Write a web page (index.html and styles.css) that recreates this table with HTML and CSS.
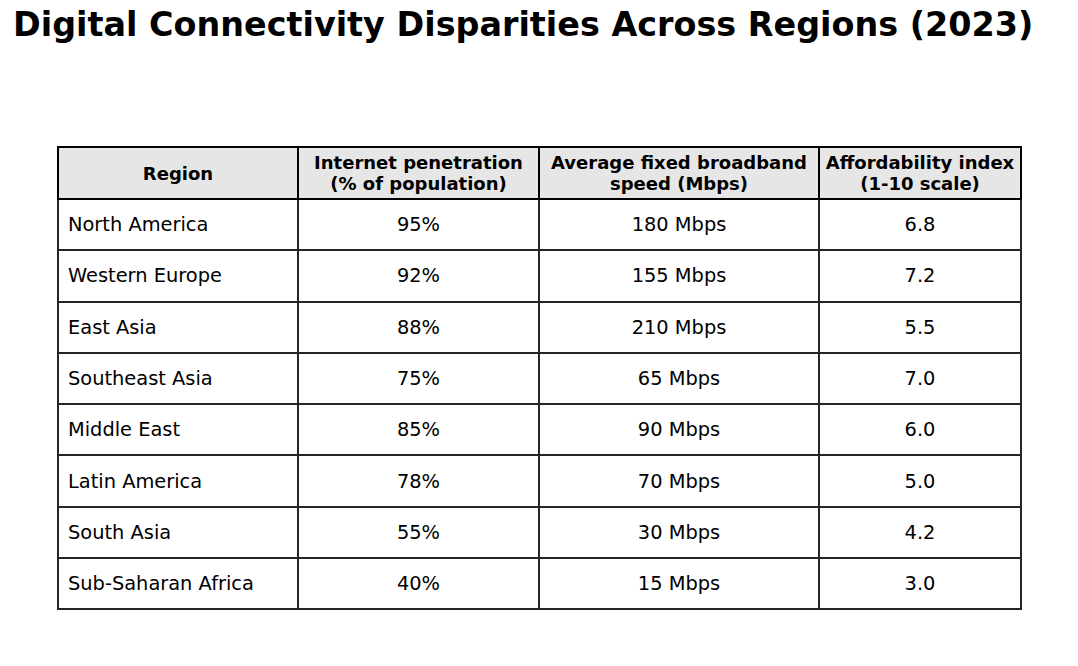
FILE: index.html
```html
<!DOCTYPE html>
<html>
<head>
<meta charset="utf-8">
<link rel="stylesheet" href="styles.css">
</head>
<body>
<h1 class="title">Digital Connectivity Disparities Across Regions (2023)</h1>
<div class="wrap">
<table class="data">
<colgroup>
<col class="c1"><col class="c2"><col class="c3"><col class="c4">
</colgroup>
<thead>
<tr><th>Region</th><th>Internet penetration<br>(% of population)</th><th>Average fixed broadband<br>speed (Mbps)</th><th>Affordability index<br>(1-10 scale)</th></tr>
</thead>
<tbody>
<tr><td class="name">North America</td><td>95%</td><td>180 Mbps</td><td>6.8</td></tr>
<tr><td class="name">Western Europe</td><td>92%</td><td>155 Mbps</td><td>7.2</td></tr>
<tr><td class="name">East Asia</td><td>88%</td><td>210 Mbps</td><td>5.5</td></tr>
<tr><td class="name">Southeast Asia</td><td>75%</td><td>65 Mbps</td><td>7.0</td></tr>
<tr><td class="name">Middle East</td><td>85%</td><td>90 Mbps</td><td>6.0</td></tr>
<tr><td class="name">Latin America</td><td>78%</td><td>70 Mbps</td><td>5.0</td></tr>
<tr><td class="name">South Asia</td><td>55%</td><td>30 Mbps</td><td>4.2</td></tr>
<tr><td class="name">Sub-Saharan Africa</td><td>40%</td><td>15 Mbps</td><td>3.0</td></tr>
</tbody>
</table>
</div>
</body>
</html>
```
FILE: styles.css
```css
html, body {
  margin: 0;
  padding: 0;
  background: #fff;
  font-family: "DejaVu Sans", sans-serif;
  color: #000;
}
.title {
  margin: 8px 0 0 13px;
  font-size: 33.4px;
  line-height: 34px;
  font-weight: bold;
  white-space: nowrap;
}
.wrap {
  padding: 104px 0 0 57px;
}
.data {
  border-collapse: collapse;
  table-layout: fixed;
  width: 963px;
}
.c1 { width: 240px; }
.c2 { width: 241px; }
.c3 { width: 280px; }
.c4 { width: 202px; }
.data thead tr { height: 52px; }
.data tbody tr { height: 51.3px; }
.data th {
  background: #e6e6e6;
  border: 2px solid #000;
  font-size: 18px;
  line-height: 21px;
  font-weight: bold;
  padding: 0;
  text-align: center;
}
.data td {
  border: 2px solid #262626;
  font-size: 19.4px;
  padding: 0;
  text-align: center;
}
.data td.name {
  text-align: left;
  padding-left: 9px;
}
```
